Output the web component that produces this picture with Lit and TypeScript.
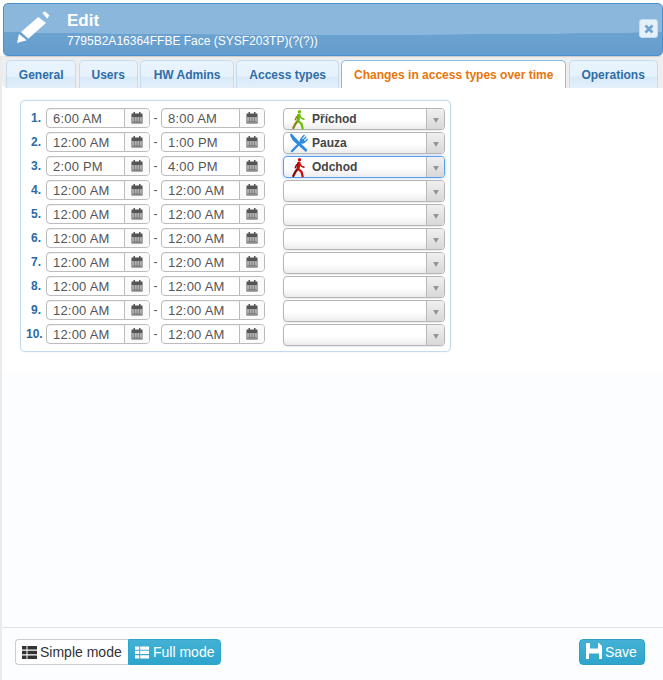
import { LitElement, html, css, svg } from "lit";
import { customElement } from "lit/decorators.js";

const walker = (c: string, d: string) => svg`<svg class="ic" width="22" height="22" viewBox="0 0 22 22" fill="none" stroke-linecap="round" stroke-linejoin="round">
  <circle cx="9.500" cy="3.800" r="1.700" fill="${c}"/>
  <path d="M8.500 7 L7.600 13 L5.300 16 L3.300 20" stroke="${d}" stroke-width="2.300"/>
  <path d="M9.500 7 L8.300 13 L11.500 15.800 L12.600 20.300" stroke="${c}" stroke-width="2.300"/>
  <path d="M9.200 7.300 L11.500 10.300 L14 11.300" stroke="${c}" stroke-width="1.500"/>
  <path d="M8.500 7.300 L6.300 9.300 L5.300 11.800" stroke="${d}" stroke-width="1.500"/>
  <path d="M8 6.800 L10 6.800 L9.200 12 L8 12 Z" fill="${c}"/>
</svg>`;

const cutlery = svg`<svg class="ic cut" width="20" height="20" viewBox="0 0 20 20">
  <path d="M1 1.500 L2.500 .5 L11 9.500 L18.500 17 L16.800 19 L8.500 11.500 Q2 7 1 1.500 Z" fill="#2f8be0"/>
  <path d="M1.500 18 L10.500 8.800 Q10.500 5.500 15 1.500 L16 2.500 L13.200 5.600 L14 6.300 L16.800 3.300 L17.700 4.200 L14.900 7.200 L15.700 8 L18.600 5.200 L19 6.500 Q15.500 11.500 12 10.500 L3.200 19.500 Z" fill="#2f8be0"/>
</svg>`;

const calendar = svg`<svg width="12" height="12" viewBox="0 0 12 12"><path d="M2.500 0h1.500v1.500h4V0h1.500v1.500H11.500V11.500H.5V1.500h2z M1.500 5v5.500h9V5z" fill="#555"/><path d="M2 5.500h8v1H2zM2 7.500h8v1H2zM2 9.300h8v1H2z" fill="#666"/><path d="M3.500 5v6M6 5v6M8.500 5v6" stroke="#666" stroke-width=".6"/></svg>`;

const tableIcon = (c: string, w: number) => svg`<svg width="${w}" height="13" viewBox="0 0 15 13"><path d="M0 0h4.500v3.500H0zM5.500 0H15v3.500H5.500zM0 4.700h4.500v3.500H0zM5.500 4.700H15v3.500H5.500zM0 9.400h4.500v3.500H0zM5.500 9.400H15v3.500H5.500z" fill="${c}"/></svg>`;

const rows: [string, string, string, string][] = [
  ["1.", "6:00 AM", "8:00 AM", "a"],
  ["2.", "12:00 AM", "1:00 PM", "b"],
  ["3.", "2:00 PM", "4:00 PM", "c"],
  ...["4.", "5.", "6.", "7.", "8.", "9.", "10."].map(
    (n) => [n, "12:00 AM", "12:00 AM", ""] as [string, string, string, string]
  ),
];

const tabs = ["General", "Users", "HW Admins", "Access types", "Changes in access types over time", "Operations"];
const widths = [70.3, 59, 94, 102.4, 225, 89];

@customElement("app-root")
export class AppRoot extends LitElement {
  static styles = css`
    :host { display: block; width: 663px; height: 680px; box-sizing: border-box; font-family: "Liberation Sans", Arial, sans-serif; background: #fff; padding-top: 3px; overflow: hidden; position: relative; }
    .shell { display: flex; flex-direction: column; height: 677px; }
    .head { margin-left: 3px; height: 53px; box-sizing: border-box; border: 1px solid #4a90cc; border-radius: 5px; background: radial-gradient(ellipse 800px 31px at 50% 0, #8ab7db 99%, transparent 100%), linear-gradient(#74a9d4, #649dcd); display: flex; color: #fff; position: relative; box-shadow: 0 1px 1px rgba(0,0,0,.15); }
    .pencil { width: 34px; height: 36px; margin: 6px 0 0 12px; flex: none; }
    .titles { margin-left: 17px; }
    .t1 { font-size: 17px; font-weight: 700; line-height: 18px; margin-top: 8px; }
    .t2 { font-size: 12px; line-height: 14px; margin-top: 4px; white-space: nowrap; }
    .close { position: absolute; right: 4px; top: 15px; width: 19px; height: 19px; box-sizing: border-box; border-radius: 3px; background: #e6f0f8; border: 1px solid #c5dcee; display: flex; align-items: center; justify-content: center; }
    .body { flex: 1; display: flex; flex-direction: column; border-left: 2px solid #ebebeb; min-height: 0; }
    .tabs { display: flex; gap: 2.4px; height: 32px; box-sizing: border-box; background: #eeeeee; padding: 4px 0 0 4px; border-radius: 0 0 0 5px; }
    .tab { flex: none; box-sizing: border-box; height: 28px; border: 1px solid #c5dcee; border-bottom: none; border-radius: 5px 5px 0 0; background: linear-gradient(#e8f3fd 0, #e6f2fc 55%, #d8e9f8 62%, #e4f0fb 100%); font-size: 12px; font-weight: 700; color: #2f6ca8; display: flex; align-items: center; justify-content: center; white-space: nowrap; }
    .tab.active { background: linear-gradient(#fff, #fff 70%, #fdfeff); color: #e8750a; border-color: #8abce6; }
    .content { flex: 1; padding: 12px 0 0 18px; background: linear-gradient(#fff, #fff 280px, #fcfdfe 290px); }
    .box { width: 431px; height: 252px; box-sizing: border-box; border: 1px solid #c4daee; border-radius: 5px; padding: 7px 0 0 5px; display: grid; grid-template-columns: 20px 104px 11px 104px 18px 162px; grid-auto-rows: 24px; background: #fff; box-shadow: 0 0 2px rgba(180,205,230,.4); }
    .num { font-size: 12px; font-weight: 700; color: #2b6aa6; line-height: 20px; text-align: right; padding-right: 5px; white-space: nowrap; }
    .time { box-sizing: border-box; height: 20px; display: flex; border: 1px solid #bcbcbc; border-radius: 4px; background: #fff; color: #555; font-size: 13px; letter-spacing: .2px; }
    .val { flex: 1; line-height: 20px; padding-left: 6px; box-shadow: inset 0 1px 1px rgba(0,0,0,.06); white-space: nowrap; }
    .cal { width: 24px; border-left: 1px solid #bcbcbc; display: flex; align-items: center; justify-content: center; background: #fafafa; border-radius: 0 3px 3px 0; }
    .dash { text-align: center; color: #555; font-size: 12px; line-height: 21px; }
    .sel { grid-column: 6; box-sizing: border-box; height: 22px; border: 1px solid #b5b5b5; border-radius: 4px; display: flex; background: linear-gradient(#fff, #fff 55%, #ececec); box-shadow: 0 1px 1px rgba(0,0,0,.08); position: relative; }
    .sel.focus { border-color: #5b9ef0; box-shadow: 0 0 3px rgba(90,150,240,.55); }
    .opt { flex: 1; display: flex; align-items: center; font-size: 12px; font-weight: 700; color: #444; position: relative; padding-left: 28px; white-space: nowrap; }
    .ic { position: absolute; left: 6px; top: -1px; }
    .ic.cut { left: 5px; top: 0; }
    .arrow { width: 17px; border-left: 1px solid #b8b8b8; display: flex; align-items: center; justify-content: center; background: linear-gradient(#f0f0f0, #d8d8d8); border-radius: 0 3px 3px 0; }
    .arrow i { display: block; width: 0; height: 0; margin-top: 3px; border: 3.5px solid transparent; border-top: 5px solid #969696; border-bottom: none; }
    .foot { height: 53px; box-sizing: border-box; border-top: 1px solid #e2e2e2; padding: 11px 18px 0 13px; display: flex; justify-content: space-between; align-items: flex-start; background: #fcfdfe; }
    .group { display: flex; height: 26px; }
    .btn { box-sizing: border-box; height: 26px; display: flex; align-items: center; font-size: 14px; white-space: nowrap; }
    .simple { width: 113px; padding-left: 6px; gap: 3px; border: 1px solid #ccc; border-right: none; border-radius: 4px 0 0 4px; background: #fff; color: #333; }
    .full { width: 93px; padding-left: 6px; gap: 4px; background: linear-gradient(#44b1d5, #2ea5cc); color: #fff; border-radius: 0 4px 4px 0; border: 1px solid #2ea5cc; }
    .save { width: 66px; padding-left: 6px; gap: 3px; background: linear-gradient(#44b1d5, #2ea5cc); color: #fff; border-radius: 4px; border: 1px solid #2f9fc6; }
    .save svg { margin-top: -3px; }
  `;

  render() {
    return html`<div class="shell">
      <div class="head">
        <svg class="pencil" viewBox="0 0 34 36">
          <path d="M26.300 3 L29 1.300 L33.300 5.300 L31.300 8.700 Z" fill="#fff"/>
          <path d="M22.300 7 L30 13 L12.300 28.700 L5 22 Z" fill="#fff"/>
          <path d="M3 24 L10.700 30.300 L1 33 Z" fill="#fff"/>
        </svg>
        <div class="titles">
          <div class="t1">Edit</div>
          <div class="t2">7795B2A16364FFBE Face (SYSF203TP)(?(?))</div>
        </div>
        <div class="close"><svg width="10" height="10" viewBox="0 0 10 10"><path d="M1.500 1.500 L8.500 8.500 M8.500 1.500 L1.500 8.500" stroke="#6fa3cf" stroke-width="2.600"/></svg></div>
      </div>
      <div class="body">
        <div class="tabs">
          ${tabs.map((t, i) => html`<div class="tab ${i === 4 ? "active" : ""}" style="width:${widths[i]}px">${t}</div>`)}
        </div>
        <div class="content">
          <div class="box">
            ${rows.map(([n, a, b, k]) => html`
              <div class="num">${n}</div>
              <div class="time"><div class="val">${a}</div><div class="cal">${calendar}</div></div>
              <div class="dash">-</div>
              <div class="time"><div class="val">${b}</div><div class="cal">${calendar}</div></div>
              <div class="sel ${k === "c" ? "focus" : ""}">
                <div class="opt">
                  ${k === "a" ? html`${walker("#6cc000", "#8a8a10")}Příchod` : ""}
                  ${k === "b" ? html`${cutlery}Pauza` : ""}
                  ${k === "c" ? html`${walker("#c81010", "#8a0808")}Odchod` : ""}
                </div>
                <div class="arrow"><i></i></div>
              </div>`)}
          </div>
        </div>
        <div class="foot">
          <div class="group">
            <div class="btn simple">${tableIcon("#333", 15)}Simple mode</div>
            <div class="btn full">${tableIcon("#fff", 14)}Full mode</div>
          </div>
          <div class="btn save"><svg width="16" height="16" viewBox="0 0 16 16"><path d="M0 0H13L16 3V16H0Z M4 0V5.500H12V0Z M3 10.500V16H13V10.500Z" fill="#fff" fill-rule="evenodd"/></svg>Save</div>
        </div>
      </div>
    </div>`;
  }
}
